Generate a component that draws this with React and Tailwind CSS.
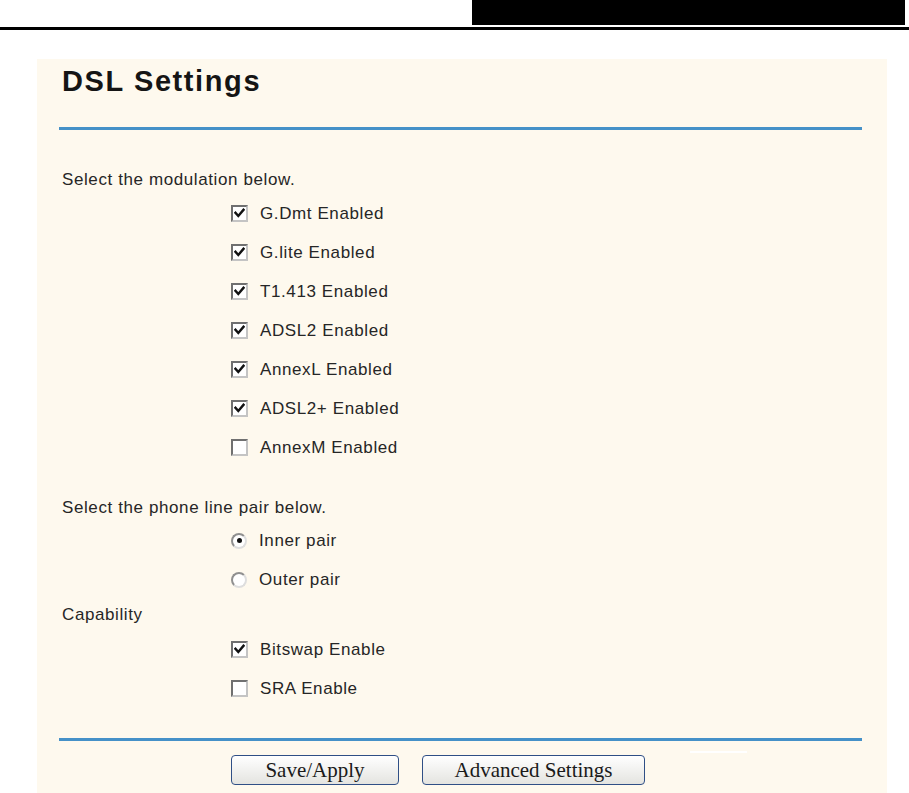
import React from 'react'

const body = { fontFamily: '"Liberation Sans", Arial, sans-serif' }
const btnFont = { fontFamily: '"Liberation Serif", "Times New Roman", serif' }

function Check({ checked }) {
  return (
    <span className="flex items-center justify-center w-[17px] h-[17px] border-2 border-[#707070] border-r-[#c4c4c4] border-b-[#c4c4c4] bg-white shrink-0">
      {checked && (
        <svg width="11" height="11" viewBox="0 0 11 11">
          <path d="M1.5 4.8 L4.3 8 L9.5 1.8" fill="none" stroke="#111" strokeWidth="2.4" strokeLinecap="square" />
        </svg>
      )}
    </span>
  )
}

function Radio({ checked }) {
  return (
    <span className="flex items-center justify-center w-[16px] h-[16px] rounded-full border-2 border-[#909090] border-r-[#dedede] border-b-[#dedede] bg-white shrink-0">
      {checked && <span className="w-[5px] h-[5px] rounded-full bg-[#111]" />}
    </span>
  )
}

function Row({ children, label }) {
  return (
    <div className="flex items-center h-[39px] pl-[194px] gap-[12px]">
      {children}
      <span className="text-[17px] tracking-[0.6px] text-[#262626]">{label}</span>
    </div>
  )
}

function Heading({ children, className = '' }) {
  return (
    <div className={`flex items-center h-[20px] pl-[25px] text-[17px] tracking-[0.6px] text-[#262626] ${className}`}>
      {children}
    </div>
  )
}

export default function App() {
  const modulations = [
    ['G.Dmt Enabled', true],
    ['G.lite Enabled', true],
    ['T1.413 Enabled', true],
    ['ADSL2 Enabled', true],
    ['AnnexL Enabled', true],
    ['ADSL2+ Enabled', true],
    ['AnnexM Enabled', false],
  ]

  return (
    <div className="w-[909px] h-[793px] bg-white overflow-hidden" style={body}>
      {/* ── page header ── */}
      <div className="flex h-[25px]">
        <div className="ml-auto mr-[4px] w-[433px] h-full bg-black" />
      </div>
      <div className="mt-[2px] h-[3px] bg-black" />

      {/* ── settings panel ── */}
      <div className="mt-[29px] ml-[37px] w-[850px] h-[734px] bg-[#fef9ee] pt-[6px]">
        <div className="h-[32px] leading-[32px] pl-[25px] text-[29px] font-bold tracking-[1.6px] text-[#151515]">
          DSL Settings
        </div>
        <div className="mt-[30px] ml-[22px] w-[803px] h-[3px] bg-[#4591c8]" />

        <Heading className="mt-[40px]">Select the modulation below.</Heading>
        <div className="mt-[4px]">
          {modulations.map(([label, on]) => (
            <Row key={label} label={label}><Check checked={on} /></Row>
          ))}
        </div>

        <Heading className="mt-[31px]">Select the phone line pair below.</Heading>
        <div className="mt-[3px]">
          <Row label="Inner pair"><Radio checked /></Row>
          <Row label="Outer pair"><Radio /></Row>
        </div>

        <Heading className="mt-[6px]">Capability</Heading>
        <div className="mt-[5px]">
          <Row label="Bitswap Enable"><Check checked /></Row>
          <Row label="SRA Enable"><Check /></Row>
        </div>

        <div className="mt-[30px] ml-[22px] w-[803px] h-[3px] bg-[#4591c8]" />

        <div className="flex items-start mt-[14px] pl-[194px] gap-[23px]">
          <button
            className="w-[168px] h-[30px] rounded-[4px] border border-[#2f4f86] bg-gradient-to-b from-white to-[#e4e4e0] text-[21px] leading-none text-[#1a1a1a]"
            style={btnFont}>
            Save/Apply
          </button>
          <button
            className="w-[223px] h-[30px] rounded-[4px] border border-[#2f4f86] bg-gradient-to-b from-white to-[#e4e4e0] text-[21px] leading-none text-[#1a1a1a]"
            style={btnFont}>
            Advanced Settings
          </button>
          <div className="mt-[-4px] ml-[22px] w-[57px] h-[2px] bg-white" />
        </div>
      </div>
    </div>
  )
}
